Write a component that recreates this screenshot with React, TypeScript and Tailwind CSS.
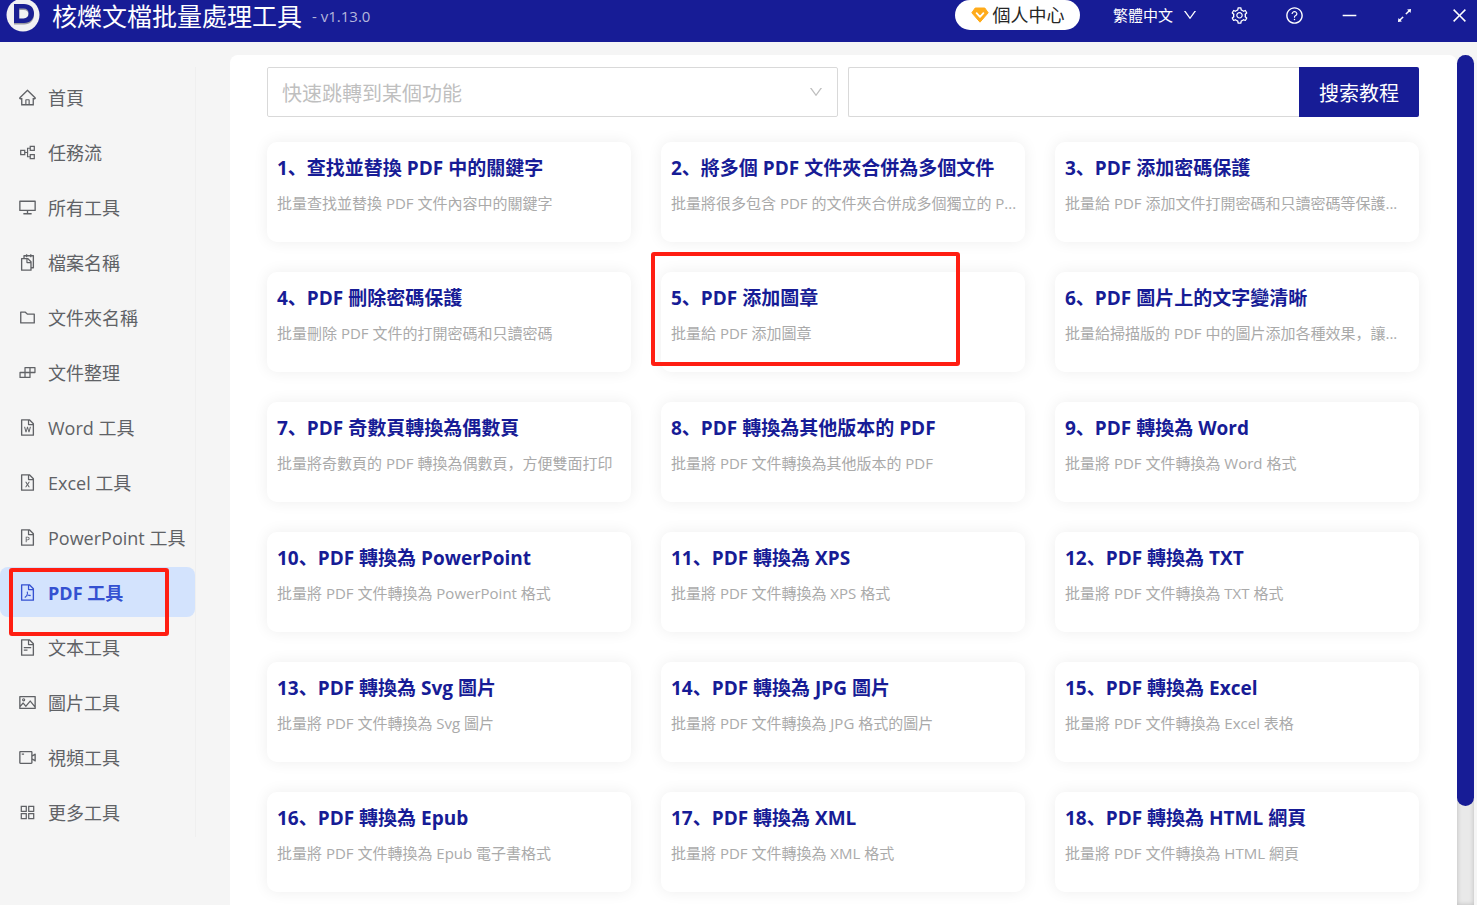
import React from "react";
import type { IconType } from "react-icons";
import {
  AiOutlineAppstore,
  AiOutlineArrowsAlt,
  AiOutlineBuild,
  AiOutlineClose,
  AiOutlineDesktop,
  AiOutlineDown,
  AiOutlineFileExcel,
  AiOutlineFilePdf,
  AiOutlineFilePpt,
  AiOutlineFileText,
  AiOutlineFileWord,
  AiOutlineFolder,
  AiOutlineHome,
  AiOutlineMinus,
  AiOutlinePartition,
  AiOutlinePicture,
  AiOutlineQuestionCircle,
  AiOutlineSetting,
  AiOutlineSnippets,
  AiOutlineVideoCamera,
} from "react-icons/ai";

interface NavEntry {
  label: string;
  icon: IconType;
  active?: boolean;
}

interface Tool {
  title: string;
  desc: string;
  marked?: boolean;
}

const navEntries: NavEntry[] = [
  { label: "首頁", icon: AiOutlineHome },
  { label: "任務流", icon: AiOutlinePartition },
  { label: "所有工具", icon: AiOutlineDesktop },
  { label: "檔案名稱", icon: AiOutlineSnippets },
  { label: "文件夾名稱", icon: AiOutlineFolder },
  { label: "文件整理", icon: AiOutlineBuild },
  { label: "Word 工具", icon: AiOutlineFileWord },
  { label: "Excel 工具", icon: AiOutlineFileExcel },
  { label: "PowerPoint 工具", icon: AiOutlineFilePpt },
  { label: "PDF 工具", icon: AiOutlineFilePdf, active: true },
  { label: "文本工具", icon: AiOutlineFileText },
  { label: "圖片工具", icon: AiOutlinePicture },
  { label: "視頻工具", icon: AiOutlineVideoCamera },
  { label: "更多工具", icon: AiOutlineAppstore },
];

const tools: Tool[] = [
  { title: "查找並替換 PDF 中的關鍵字", desc: "批量查找並替換 PDF 文件內容中的關鍵字" },
  { title: "將多個 PDF 文件夾合併為多個文件", desc: "批量將很多包含 PDF 的文件夾合併成多個獨立的 P..." },
  { title: "PDF 添加密碼保護", desc: "批量給 PDF 添加文件打開密碼和只讀密碼等保護..." },
  { title: "PDF 刪除密碼保護", desc: "批量刪除 PDF 文件的打開密碼和只讀密碼" },
  { title: "PDF 添加圖章", desc: "批量給 PDF 添加圖章", marked: true },
  { title: "PDF 圖片上的文字變清晰", desc: "批量給掃描版的 PDF 中的圖片添加各種效果，讓..." },
  { title: "PDF 奇數頁轉換為偶數頁", desc: "批量將奇數頁的 PDF 轉換為偶數頁，方便雙面打印" },
  { title: "PDF 轉換為其他版本的 PDF", desc: "批量將 PDF 文件轉換為其他版本的 PDF" },
  { title: "PDF 轉換為 Word", desc: "批量將 PDF 文件轉換為 Word 格式" },
  { title: "PDF 轉換為 PowerPoint", desc: "批量將 PDF 文件轉換為 PowerPoint 格式" },
  { title: "PDF 轉換為 XPS", desc: "批量將 PDF 文件轉換為 XPS 格式" },
  { title: "PDF 轉換為 TXT", desc: "批量將 PDF 文件轉換為 TXT 格式" },
  { title: "PDF 轉換為 Svg 圖片", desc: "批量將 PDF 文件轉換為 Svg 圖片" },
  { title: "PDF 轉換為 JPG 圖片", desc: "批量將 PDF 文件轉換為 JPG 格式的圖片" },
  { title: "PDF 轉換為 Excel", desc: "批量將 PDF 文件轉換為 Excel 表格" },
  { title: "PDF 轉換為 Epub", desc: "批量將 PDF 文件轉換為 Epub 電子書格式" },
  { title: "PDF 轉換為 XML", desc: "批量將 PDF 文件轉換為 XML 格式" },
  { title: "PDF 轉換為 HTML 網頁", desc: "批量將 PDF 文件轉換為 HTML 網頁" },
];

function Logo() {
  return (
    <svg viewBox="0 0 34 34" className="size-[34px] shrink-0" aria-hidden="true">
      <circle cx="17" cy="17" r="16.5" fill="#f1f1f3" />
      <path
        d="M8 7.5h10c6.200 0 10 3.600 10 9.200S24.200 26.500 18 26.500H8zM13.200 12v10h4.300c3.200 0 5.100-1.900 5.100-5.200 0-3-1.900-4.800-5.100-4.800z"
        fill="#9a9aa2"
        fillRule="evenodd"
      />
      <path
        d="M8 6h10c6.200 0 10 3.600 10 9.200S24.200 25 18 25H8zM13.200 10.500v10h4.300c3.200 0 5.100-1.900 5.100-5.200 0-3-1.900-4.800-5.100-4.800z"
        fill="#1a1f93"
        fillRule="evenodd"
      />
    </svg>
  );
}

function Diamond() {
  return (
    <svg viewBox="0 0 18 16" className="h-4 w-[18px]" aria-hidden="true">
      <path d="M4.200 1h9.600l3.400 4.800L9 15.200.8 5.800z" fill="#ffab1a" stroke="#ffab1a" strokeLinejoin="round" />
      <path d="M5.600 6.200L9 9.800l3.400-3.600" fill="none" stroke="#fff" strokeWidth="1.800" strokeLinecap="round" strokeLinejoin="round" />
    </svg>
  );
}

function TitleBar() {
  const actions: [string, IconType][] = [
    ["設定", AiOutlineSetting],
    ["說明", AiOutlineQuestionCircle],
    ["最小化", AiOutlineMinus],
    ["展開", AiOutlineArrowsAlt],
    ["關閉", AiOutlineClose],
  ];
  return (
    <header className="flex h-[42px] shrink-0 items-center bg-[#171c96] pr-2 pb-3 pl-1.5 text-white">
      <Logo />
      <h1 className="ml-3 pt-0.5 text-[25px] leading-7 font-normal whitespace-nowrap">核爍文檔批量處理工具</h1>
      <span className="ml-2.5 pt-0.5 text-[15px] leading-6 text-[#b4b6dc]">- v1.13.0</span>
      <div className="ml-auto flex items-center">
        <button className="flex h-[30px] w-[125px] items-center justify-center gap-1 rounded-full bg-white text-lg leading-6 whitespace-nowrap text-[#262626]">
          <Diamond />
          個人中心
        </button>
        <div className="relative ml-[33px] flex w-[85px] items-center">
          <select
            aria-label="語言"
            className="w-full appearance-none bg-transparent text-[15px] leading-6 text-white outline-none"
          >
            <option>繁體中文</option>
          </select>
          <AiOutlineDown className="pointer-events-none absolute right-0 size-4" />
        </div>
        <div className="ml-[31px] flex items-center gap-[35px]">
          {actions.map(([name, Icon]) => (
            <button key={name} aria-label={name} className="flex size-5 items-center justify-center">
              <Icon className="size-[19px]" />
            </button>
          ))}
        </div>
      </div>
    </header>
  );
}

function Sidebar() {
  return (
    <nav className="w-[196px] shrink-0 pt-[25px]">
      <ul className="flex flex-col gap-[5px] border-r border-[#efefef] pt-[5px]">
        {navEntries.map(({ label, icon: Icon, active }) => (
          <li key={label} className="relative">
            <a
              href="#"
              aria-current={active ? "page" : undefined}
              className={
                active
                  ? "flex h-[50px] items-center gap-[11px] rounded-lg bg-[#d3e3fd] pt-px pl-[18px] text-lg font-bold whitespace-nowrap text-[#3451d1]"
                  : "flex h-[50px] items-center gap-[11px] rounded-lg pt-px pl-[18px] text-lg whitespace-nowrap text-[#606266]"
              }
            >
              <Icon className="size-[19px] shrink-0" />
              {label}
            </a>
            {active && (
              <div className="pointer-events-none absolute top-px left-[9px] z-10 h-[68px] w-40 rounded-[3px] border-4 border-[#ff1e12]" />
            )}
          </li>
        ))}
      </ul>
    </nav>
  );
}

function SearchRow() {
  return (
    <div className="grid grid-cols-2 gap-2.5">
      <div className="relative flex items-center">
        <select
          aria-label="快速跳轉到某個功能"
          className="h-[50px] w-full appearance-none rounded-xs border border-[#d9d9d9] bg-white px-3.5 pt-1 text-xl text-[#bfbfbf] outline-none"
        >
          <option>快速跳轉到某個功能</option>
        </select>
        <AiOutlineDown className="pointer-events-none absolute right-3.5 size-4 text-[#bfbfbf]" />
      </div>
      <form className="flex" onSubmit={(e) => e.preventDefault()}>
        <input
          aria-label="搜索教程"
          className="h-[50px] min-w-0 flex-1 rounded-l-xs border border-r-0 border-[#d9d9d9] bg-white px-3.5 text-xl outline-none"
        />
        <button className="h-[50px] w-[120px] rounded-r-xs bg-[#171c96] pt-1 text-xl whitespace-nowrap text-white">
          搜索教程
        </button>
      </form>
    </div>
  );
}

function ToolCard({ tool, index }: { tool: Tool; index: number }) {
  return (
    <li className="relative">
      <a
        href="#"
        className="block h-[100px] rounded-[10px] bg-white px-2.5 pt-[11px] shadow-[0_0_15px_rgba(0,0,0,0.07)]"
      >
        <h2 className="text-[19px] leading-[30px] font-bold whitespace-nowrap text-[#171c96]">
          {`${index}、${tool.title}`}
        </h2>
        <p className="mt-2 text-[15px] leading-6 whitespace-nowrap text-[#aaaaaa]">{tool.desc}</p>
      </a>
      {tool.marked && (
        <div className="pointer-events-none absolute -top-5 -left-2.5 z-10 h-[114px] w-[309px] rounded-[3px] border-4 border-[#ff1e12]" />
      )}
    </li>
  );
}

export default function App() {
  return (
    <div
      lang="zh-Hans"
      className="flex h-screen flex-col overflow-hidden bg-[#f5f5f5] font-['Open_Sans','Noto_Sans_CJK_SC',sans-serif]"
    >
      <TitleBar />
      <div className="flex min-h-0 flex-1">
        <Sidebar />
        <div className="mt-[13px] mr-[3px] ml-[34px] flex min-w-0 flex-1">
          <main className="min-w-0 flex-1 overflow-hidden rounded-t-lg bg-white pt-3 pr-[38px] pl-[37px]">
            <SearchRow />
            <ul className="mt-[25px] grid grid-cols-3 gap-[30px]">
              {tools.map((tool, i) => (
                <ToolCard key={tool.title} tool={tool} index={i + 1} />
              ))}
            </ul>
          </main>
          <div className="w-[17px] shrink-0 rounded-t-full bg-[#e9e9e9] pb-[99px] shadow-[inset_0_0_5px_rgba(0,0,0,0.2)]">
            <div className="h-full rounded-full bg-[#171c96]" />
          </div>
        </div>
      </div>
    </div>
  );
}
